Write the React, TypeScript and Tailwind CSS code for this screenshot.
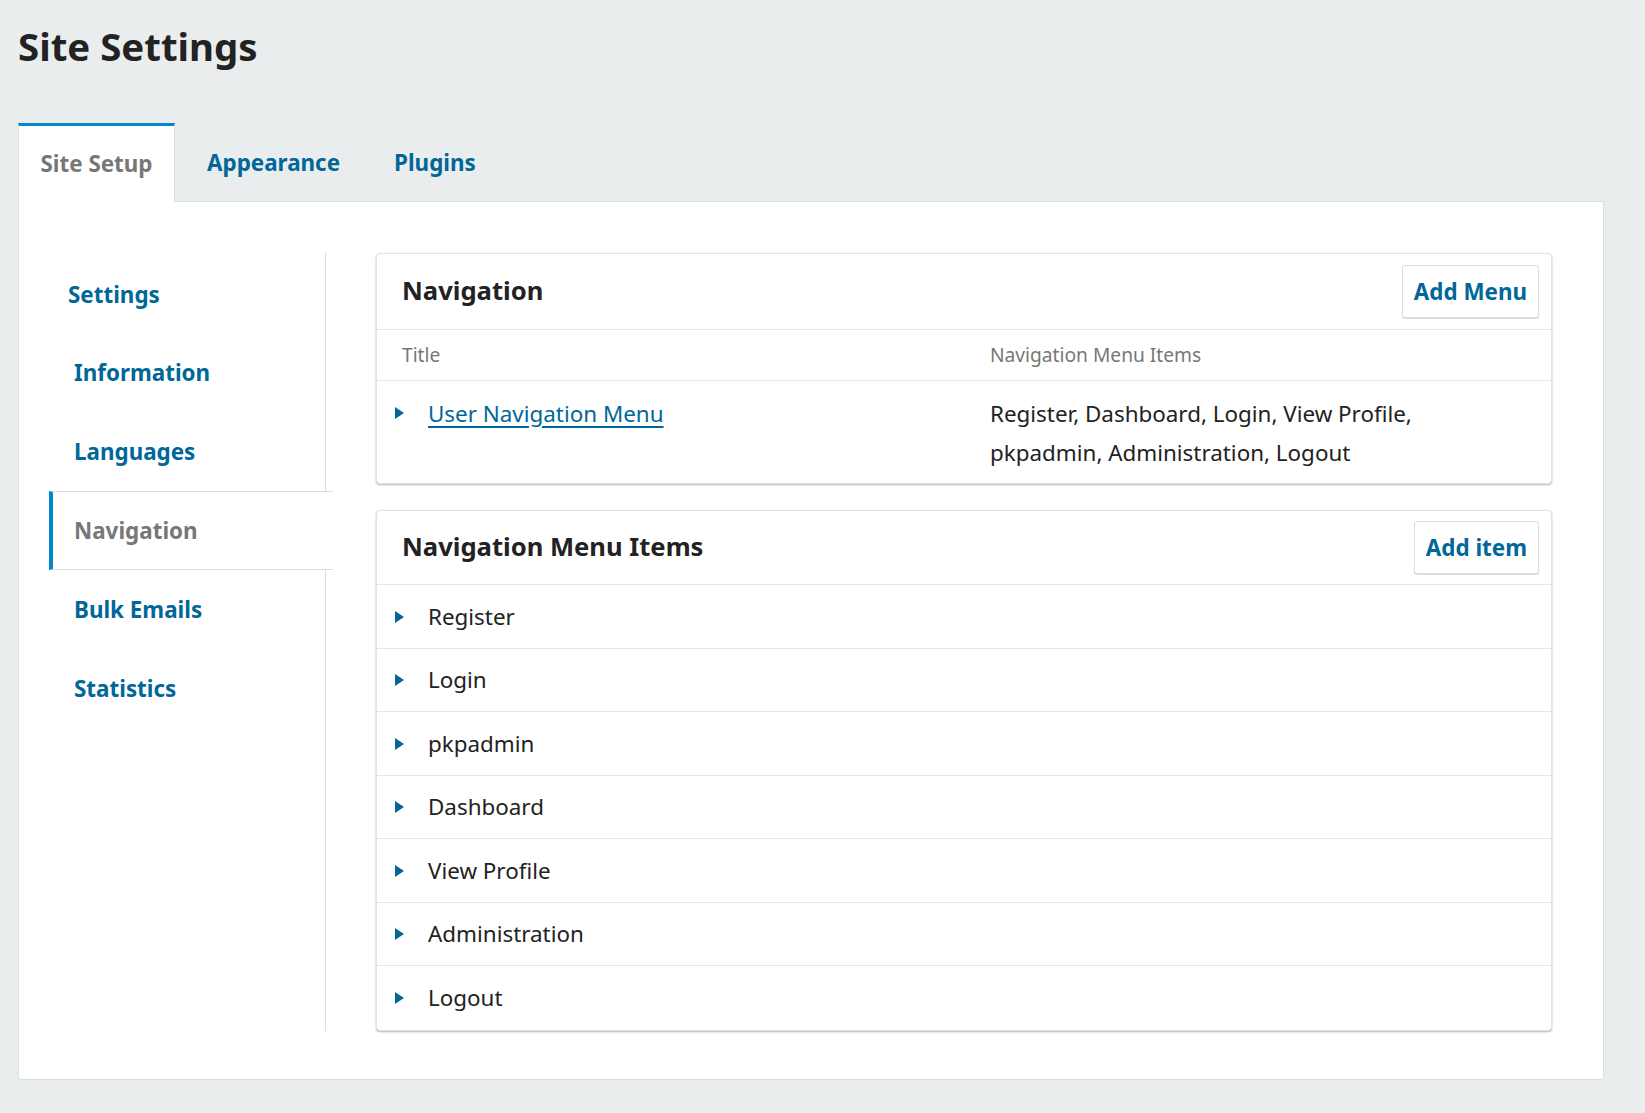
import React from "react";

const font = { fontFamily: '"Noto Sans", "Open Sans", Arial, sans-serif' };

function Tri() {
  return (
    <svg width="9" height="12" viewBox="0 0 9 12" className="shrink-0">
      <path d="M0 0 L9 6 L0 12 Z" fill="#006798" />
    </svg>
  );
}

const sideItems = ["Settings", "Information", "Languages", "Navigation", "Bulk Emails", "Statistics"];
const menuItems = ["Register", "Login", "pkpadmin", "Dashboard", "View Profile", "Administration", "Logout"];

export default function App() {
  return (
    <div style={font} className="min-h-[1113px] bg-[#eaedee] pl-[18px] pr-[41px] pt-[19px] pb-[36px] text-[#222]">
      <h1 className="text-[38.4px] font-bold leading-[54px] text-[#222] m-0">Site Settings</h1>
      <div className="mt-[50px] flex items-end">
        <div className="relative z-10 -mb-px flex h-[79px] w-[157px] items-center justify-center border-x border-t-[3px] border-x-[#ddd] border-t-[#008acb] bg-white text-[22.4px] font-bold text-[#777]">
          Site Setup
        </div>
        <div className="flex h-[78px] items-center pl-[32px] pr-[27px] pt-[2px] text-[22.4px] font-bold text-[#006798]">Appearance</div>
        <div className="flex h-[78px] items-center pl-[27px] pt-[2px] text-[22.4px] font-bold text-[#006798]">Plugins</div>
      </div>
      <div className="flex rounded-b-[3px] border border-[#ddd] bg-white pl-[30px] pr-[51px] pt-[51px] pb-[48px]">
        <div className="w-[277px] shrink-0 border-r border-[#ddd] pt-[2px]">
          {sideItems.map((s, i) => {
            const active = s === "Navigation";
            return (
              <div
                key={s}
                className={
                  active
                    ? "relative z-10 -mr-[8px] flex h-[78.8px] items-center border-y border-l-[4px] border-y-[#ddd] border-l-[#008acb] bg-white pl-[21px] text-[22.4px] font-bold text-[#777]"
                    : "flex h-[78.8px] items-center border-y border-transparent text-[22.4px] font-bold text-[#006798] " + (i === 0 ? "pl-[19px]" : "pl-[25px]")
                }
              >
                {s}
              </div>
            );
          })}
        </div>
        <div className="ml-[50px] flex flex-1 flex-col gap-[26px]">
          <div className="rounded-[4px] border border-[#e2e2e2] bg-white shadow-[0_1px_2px_rgba(0,0,0,0.3)]">
            <div className="flex h-[76px] items-center justify-between border-b border-[#e5e5e5] pl-[25px] pr-[12px]">
              <div className="text-[25.6px] font-bold text-[#222]">Navigation</div>
              <button className="h-[53px] rounded-[3px] border border-[#ddd] bg-white px-[11px] text-[22.4px] font-bold text-[#006798] shadow-[0_1px_0_#ddd]">
                Add Menu
              </button>
            </div>
            <div className="flex h-[51px] items-center border-b border-[#e5e5e5] pl-[25px] text-[19.2px] text-[#777]">
              <div className="w-[588px]">Title</div>
              <div>Navigation Menu Items</div>
            </div>
            <div className="flex pl-[18px] pt-[13px] pb-[11px] text-[22.4px] leading-[39px]">
              <div className="flex w-[595px] items-start">
                <div className="mt-[13px]"><Tri /></div>
                <a href="#" className="ml-[24px] text-[#006798] underline underline-offset-[4px]">User Navigation Menu</a>
              </div>
              <div className="w-[470px] text-[#222]">
                Register, Dashboard, Login, View Profile, pkpadmin, Administration, Logout
              </div>
            </div>
          </div>
          <div className="rounded-[4px] border border-[#e2e2e2] bg-white shadow-[0_1px_2px_rgba(0,0,0,0.3)]">
            <div className="flex h-[74px] items-center justify-between border-b border-[#e5e5e5] pl-[25px] pr-[12px]">
              <div className="text-[25.6px] font-bold text-[#222]">Navigation Menu Items</div>
              <button className="h-[53px] rounded-[3px] border border-[#ddd] bg-white px-[11px] text-[22.4px] font-bold text-[#006798] shadow-[0_1px_0_#ddd]">
                Add item
              </button>
            </div>
            {menuItems.map((m, i) => (
              <div
                key={m}
                className={
                  "flex h-[63.5px] items-center pl-[18px] pt-[1px] text-[22.4px] text-[#222] " +
                  (i < menuItems.length - 1 ? "border-b border-[#e5e5e5]" : "")
                }
              >
                <Tri />
                <span className="ml-[24px]">{m}</span>
              </div>
            ))}
          </div>
        </div>
      </div>
    </div>
  );
}
